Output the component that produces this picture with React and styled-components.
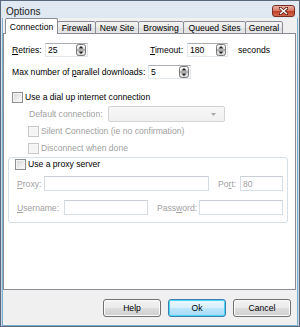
import React from "react";
import styled, { createGlobalStyle } from "styled-components";

const GlobalStyle = createGlobalStyle`
  * { box-sizing: border-box; }
  html, body { margin: 0; padding: 0; background: #ffffff; }
  body {
    font-family: "Liberation Sans", Arial, sans-serif;
    font-size: 8.6px;
    color: #000;
  }
`;

const Window = styled.div`
  width: 300px;
  height: 327px;
  display: flex;
  flex-direction: column;
  border: 1px solid #59697b;
  background: linear-gradient(180deg, #e1e9f2 0%, #cfdbe8 40%, #c8d6e5 100%);
  overflow: hidden;
`;

const TitleBar = styled.div`
  height: 17px;
  display: flex;
  align-items: center;
  justify-content: space-between;
  padding: 0 4px 0 5px;
`;

const Title = styled.span`
  font-size: 10px;
  color: #1b1b1b;
  padding-top: 3px;
`;

const CloseButton = styled.div`
  width: 23px;
  height: 12px;
  margin-top: 3px;
  border: 1px solid #7a2d22;
  border-radius: 3px;
  background: linear-gradient(180deg, #eab3a5 0%, #d77a64 45%, #c2432a 55%, #d0684e 100%);
  display: flex;
  align-items: center;
  justify-content: center;
`;

const Client = styled.div`
  flex: 1;
  margin: 0 1px;
  background: #f0f0f0;
  border: 1px solid #79aecf;
  border-top: none;
  display: flex;
  flex-direction: column;
`;

const TabBar = styled.div`
  height: 16px;
  display: flex;
  align-items: flex-end;
  padding-left: 3px;
  margin-bottom: -1px;
  position: relative;
  z-index: 2;
`;

const Tab = styled.div`
  width: ${(p) => p.$w}px;
  height: ${(p) => (p.$active ? 16 : 13)}px;
  margin-left: -1px;
  border: 1px solid #898c95;
  border-bottom: ${(p) => (p.$active ? "none" : "1px solid #898c95")};
  border-radius: 2px 2px 0 0;
  background: ${(p) =>
    p.$active ? "#ffffff" : "linear-gradient(180deg, #f3f3f3 0%, #ebebeb 50%, #dedede 51%, #e6e6e6 100%)"};
  display: flex;
  align-items: center;
  justify-content: center;
  padding-top: ${(p) => (p.$active ? 0 : 1)}px;
  white-space: nowrap;
`;

const Panel = styled.div`
  height: 257px;
  margin-right: 1px;
  border: 1px solid #898c95;
  background: #ffffff;
  display: flex;
  flex-direction: column;
  padding: 0 7px 0 4px;
`;

const Row = styled.div`
  display: flex;
  align-items: center;
  height: ${(p) => p.$h || 14}px;
  margin-top: ${(p) => p.$mt || 0}px;
  padding-left: ${(p) => (p.$indent === undefined ? 4 : p.$indent)}px;
`;

const Label = styled.span`
  width: ${(p) => (p.$w ? `${p.$w}px` : "auto")};
  margin-left: ${(p) => p.$ml || 0}px;
  flex-shrink: 0;
  white-space: nowrap;
  color: ${(p) => (p.$disabled ? "#a0a0a0" : "#000")};
`;

const Field = styled.div`
  width: ${(p) => p.$w}px;
  height: ${(p) => p.$h || 14}px;
  flex-shrink: 0;
  border: 1px solid ${(p) => (p.$disabled ? "#d6dde3" : "#e2e7ec")};
  border-top-color: ${(p) => (p.$disabled ? "#c9cfd4" : "#abadb3")};
  background: #ffffff;
  display: flex;
  align-items: center;
  justify-content: space-between;
  padding: 0 1px 0 2px;
`;

const Combo = styled.div`
  width: 117px;
  height: 16px;
  border: 1px solid #d3d3d3;
  border-radius: 2px;
  background: linear-gradient(180deg, #f7f7f7 0%, #f0f0f0 100%);
  display: flex;
  align-items: center;
  justify-content: flex-end;
  padding-right: 8px;
`;

const Check = styled.span`
  width: 11px;
  height: 11px;
  flex-shrink: 0;
  margin-right: 2px;
  border: 1px solid ${(p) => (p.$disabled ? "#c8c8c8" : "#8e8f8f")};
  background: ${(p) =>
    p.$disabled
      ? "#f4f4f4"
      : "linear-gradient(135deg, #d4d4d4 0%, #f2f2f2 70%, #fbfbfb 100%)"};
  box-shadow: inset 0 0 0 1px ${(p) => (p.$disabled ? "#f8f8f8" : "#f4f4f4")};
`;

const Group = styled.div`
  width: 280px;
  height: 66px;
  margin-top: 2px;
  border: 1px solid #d5dfe5;
  border-radius: 3px;
  display: flex;
  flex-direction: column;
`;

const ButtonRow = styled.div`
  display: flex;
  justify-content: flex-end;
  gap: 7px;
  margin-top: 9px;
  padding-right: 6px;
`;

const Button = styled.div`
  width: 58px;
  height: 18px;
  border: 1px solid ${(p) => (p.$default ? "#3c7fb1" : "#707070")};
  border-radius: 3px;
  background: ${(p) =>
    p.$default
      ? "linear-gradient(180deg, #eaf6fd 0%, #d9f0fc 50%, #bee6fd 51%, #a7d9f5 100%)"
      : "linear-gradient(180deg, #f2f2f2 0%, #ebebeb 50%, #dddddd 51%, #cfcfcf 100%)"};
  box-shadow: inset 0 0 0 1px ${(p) => (p.$default ? "#48d6f8" : "#fcfcfc")};
  display: flex;
  align-items: center;
  justify-content: center;
`;

const Spinner = () => (
  <svg width="10" height="12" viewBox="0 0 10 12">
    <defs>
      <linearGradient id="spg" x1="0" y1="0" x2="0" y2="1">
        <stop offset="0" stopColor="#f4f4f4" />
        <stop offset="1" stopColor="#d6d6d6" />
      </linearGradient>
    </defs>
    <rect x="0.5" y="0.5" width="9" height="11" rx="2" fill="url(#spg)" stroke="#7a7a7a" />
    <line x1="1" y1="6" x2="9" y2="6" stroke="#7a7a7a" />
    <path d="M5 2 L7.5 4.5 L2.5 4.5 Z" fill="#1e1e1e" />
    <path d="M5 10 L7.5 7.5 L2.5 7.5 Z" fill="#1e1e1e" />
  </svg>
);

const CloseX = () => (
  <svg width="9" height="8" viewBox="0 0 9 8">
    <path d="M1 1 L8 7 M8 1 L1 7" stroke="#5a1a10" strokeWidth="3" strokeLinecap="square" />
    <path d="M1 1 L8 7 M8 1 L1 7" stroke="#ffffff" strokeWidth="1.6" />
  </svg>
);

const ComboArrow = () => (
  <svg width="5" height="3" viewBox="0 0 5 3">
    <path d="M0 0 L5 0 L2.5 3 Z" fill="#a8a8a8" />
  </svg>
);

const tabs = [
  { name: "Connection", w: 53 },
  { name: "Firewall", w: 39 },
  { name: "New Site", w: 44 },
  { name: "Browsing", w: 46 },
  { name: "Queued Sites", w: 63 },
  { name: "General", w: 38 },
];

export default function App() {
  return (
    <>
      <GlobalStyle />
      <Window>
        <TitleBar>
          <Title>Options</Title>
          <CloseButton>
            <CloseX />
          </CloseButton>
        </TitleBar>
        <Client>
          <TabBar>
            {tabs.map((t, i) => (
              <Tab key={t.name} $w={t.w} $active={i === 0}>
                {t.name}
              </Tab>
            ))}
          </TabBar>
          <Panel>
            <Row $mt={9}>
              <Label $w={33}>
                <u>R</u>etries:
              </Label>
              <Field $w={43}>
                25
                <Spinner />
              </Field>
              <Label $w={37} $ml={62}>
                <u>T</u>imeout:
              </Label>
              <Field $w={41}>
                180
                <Spinner />
              </Field>
              <Label $ml={10}>seconds</Label>
            </Row>
            <Row $mt={8}>
              <Label $w={136}>
                Max number of <u>p</u>arallel downloads:
              </Label>
              <Field $w={43}>
                5
                <Spinner />
              </Field>
            </Row>
            <Row $mt={11}>
              <Check />
              <Label>Use a dial up internet connection</Label>
            </Row>
            <Row $mt={2} $h={16} $indent={21}>
              <Label $w={79} $disabled>
                Default connection:
              </Label>
              <Combo>
                <ComboArrow />
              </Combo>
            </Row>
            <Row $mt={2} $indent={20}>
              <Check $disabled />
              <Label $disabled>Silent Connection (ie no confirmation)</Label>
            </Row>
            <Row $mt={3} $indent={20}>
              <Check $disabled />
              <Label $disabled>Disconnect when done</Label>
            </Row>
            <Group>
              <Row $h={12} $indent={6}>
                <Check />
                <Label>Use a proxy server</Label>
              </Row>
              <Row $mt={6} $h={15} $indent={8}>
                <Label $w={27} $disabled>
                  <u>P</u>roxy:
                </Label>
                <Field $w={165} $h={15} $disabled />
                <Label $w={22} $ml={9} $disabled>
                  Po<u>r</u>t:
                </Label>
                <Field $w={43} $h={15} $disabled>
                  <Label $disabled>80</Label>
                </Field>
              </Row>
              <Row $mt={9} $h={15} $indent={8}>
                <Label $w={47} $disabled>
                  <u>U</u>sername:
                </Label>
                <Field $w={84} $h={15} $disabled />
                <Label $w={42} $ml={9} $disabled>
                  Pass<u>w</u>ord:
                </Label>
                <Field $w={84} $h={15} $disabled />
              </Row>
            </Group>
          </Panel>
          <ButtonRow>
            <Button>Help</Button>
            <Button $default>Ok</Button>
            <Button>Cancel</Button>
          </ButtonRow>
        </Client>
      </Window>
    </>
  );
}
